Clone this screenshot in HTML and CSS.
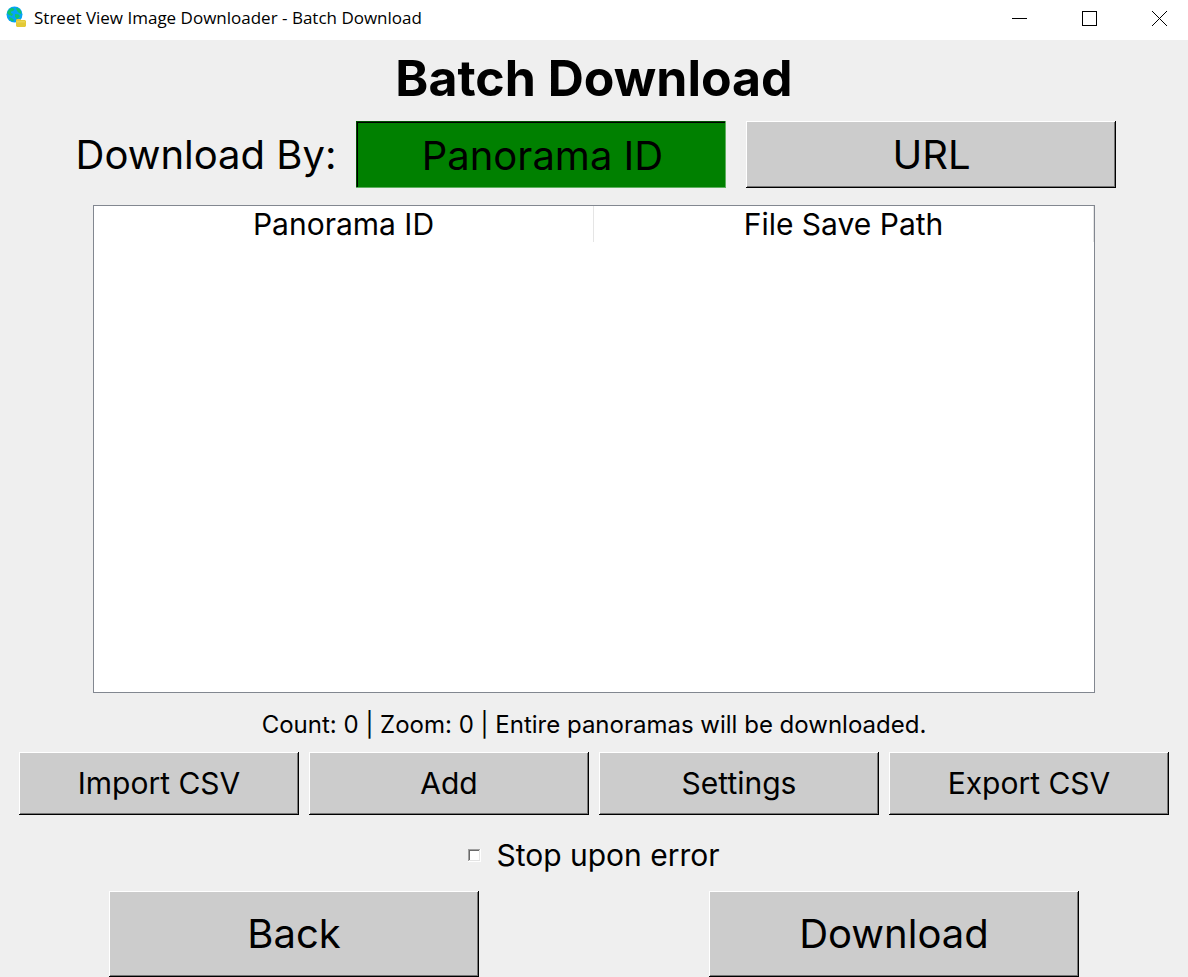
FILE: index.html
```html
<!DOCTYPE html>
<html lang="en">
<head>
<meta charset="utf-8">
<title>Street View Image Downloader - Batch Download</title>
<link rel="stylesheet" href="styles.css">
</head>
<body>
<header class="titlebar">
  <svg class="app-icon" width="22" height="22" viewBox="0 0 22 22" aria-hidden="true">
    <circle cx="8.5" cy="8.5" r="8" fill="#05a3f5"/>
    <path d="M2 5 4 2.500 7 2 8.500 3.500 7 5 5 5.500 5 7 7 8 6 10 3 9 1 7zM10 2 13 2.500 15 5 15.500 8 13 7 11 5zM9 8 13 8.500 14 10.500 11 13 9 11zM3 11 6 12 8 14 7 15.500 4 14z" fill="#10c46c"/>
    <path d="M10 14 11 13H14L15 14H19L20 15V20L19 21H11L10 20z" fill="#e3c936"/>
    <path d="M10.500 15H19V16.500H10.500z" fill="#ead552"/>
  </svg>
  <span class="window-title">Street View Image Downloader - Batch Download</span>
  <div class="window-controls">
    <button class="window-button" type="button" aria-label="Minimize"><svg width="15" height="15" viewBox="0 0 15 15" shape-rendering="crispEdges"><path d="M0 7.5H15" stroke="#000"/></svg></button>
    <button class="window-button" type="button" aria-label="Maximize"><svg width="15" height="15" viewBox="0 0 15 15" shape-rendering="crispEdges"><path d="M.5.5H14.5V14.5H.5z" fill="none" stroke="#000"/></svg></button>
    <button class="window-button" type="button" aria-label="Close"><svg width="15" height="15" viewBox="0 0 15 15"><path d="M0 0 15 15M15 0 0 15" stroke="#000"/></svg></button>
  </div>
</header>
<main class="page">
  <h1 class="heading">Batch Download</h1>
  <div class="mode-row" role="group" aria-labelledby="mode-label">
    <span class="mode-label" id="mode-label">Download By:</span>
    <button class="button mode-button selected" type="button" aria-pressed="true">Panorama ID</button>
    <button class="button mode-button" type="button" aria-pressed="false">URL</button>
  </div>
  <div class="table-frame">
    <table class="downloads">
      <thead><tr><th scope="col">Panorama ID</th><th scope="col">File Save Path</th></tr></thead>
      <tbody></tbody>
    </table>
  </div>
  <p class="status">Count: 0 | Zoom: 0 | Entire panoramas will be downloaded.</p>
  <div class="actions">
    <button class="button" type="button">Import CSV</button>
    <button class="button" type="button">Add</button>
    <button class="button" type="button">Settings</button>
    <button class="button" type="button">Export CSV</button>
  </div>
  <div class="option">
    <input class="check" type="checkbox" id="stop-on-error">
    <label for="stop-on-error">Stop upon error</label>
  </div>
  <div class="nav">
    <button class="button nav-button" type="button">Back</button>
    <button class="button nav-button" type="button">Download</button>
  </div>
</main>
</body>
</html>
```
FILE: styles.css
```css
* { box-sizing: border-box; }

body {
  margin: 0;
  min-height: 100vh;
  display: flex;
  flex-direction: column;
  background: #efefef;
  color: #000;
  font-family: Inter, "Liberation Sans", sans-serif;
  font-size: 30px;
  font-weight: 400;
}

.titlebar {
  display: flex;
  align-items: center;
  height: 40px;
  padding: 0 0 4px 6px;
  background: #fff;
}

.app-icon { margin-right: 6px; margin-bottom: 2px; }

.window-title {
  flex: 1;
  font: 400 17px/24px "Open Sans", "Noto Sans", sans-serif;
  white-space: nowrap;
}

.window-controls { display: flex; }

.window-button {
  display: flex;
  align-items: center;
  justify-content: center;
  width: 70px;
  height: 35px;
  padding: 0 0 0 12px;
  border: 0;
  background: none;
}

.page {
  flex: 1;
  display: flex;
  flex-direction: column;
  align-items: center;
  padding: 8px 19px 0;
}

.heading {
  margin: 0;
  font-size: 50px;
  font-weight: 700;
  line-height: 60px;
}

.button {
  padding: 0 0 1px;
  border: 0;
  background: #ccc;
  box-shadow: inset -1px -1px #000, inset 1px 1px #fff, inset -2px -2px #767676;
  color: #000;
  font: inherit;
}

.mode-row {
  display: flex;
  align-items: center;
  justify-content: center;
  gap: 20px;
  width: 100%;
  margin-top: 13px;
  padding-left: 4px;
  font-size: 40px;
}

.mode-label { white-space: nowrap; }

.mode-button {
  flex: 0 1 370px;
  height: 67px;
}

.selected {
  background: #008000;
  padding: 2px 0 0 2px;
  box-shadow: inset -1px -1px #5fb05f, inset 1px 1px #004d00, inset 2px 2px #000;
}

.table-frame {
  flex: 1;
  width: 100%;
  max-width: 1002px;
  margin-top: 17px;
  border: 1px solid #828790;
  background: #fff;
}

.downloads {
  width: 100%;
  table-layout: fixed;
  border-collapse: separate;
  border-spacing: 0;
}

.downloads th {
  height: 36px;
  padding: 0;
  border-right: 1px solid #e5e5e5;
  font-weight: inherit;
  line-height: 36px;
}

.status {
  margin: 16px 0 12px;
  font-size: 24px;
  font-weight: 400;
  line-height: 31px;
}

.actions {
  display: grid;
  grid-template-columns: repeat(4, 1fr);
  gap: 10px;
  width: 100%;
}

.actions .button { height: 63px; }

.option {
  display: flex;
  align-items: center;
  gap: 15px;
  margin: 22px 0 18px;
  line-height: 36px;
}

.check {
  appearance: none;
  width: 13px;
  height: 13px;
  margin: 0;
  background: #fff;
  box-shadow: inset -1px -1px #fff, inset 1px 1px #a0a0a0, inset -2px -2px #e3e3e3, inset 2px 2px #696969;
}

.check:checked { background: #000; }

.nav {
  display: flex;
  justify-content: center;
  gap: 230px;
  width: 100%;
  font-size: 40px;
}

.nav-button {
  flex: 0 1 370px;
  height: 86px;
}
```
